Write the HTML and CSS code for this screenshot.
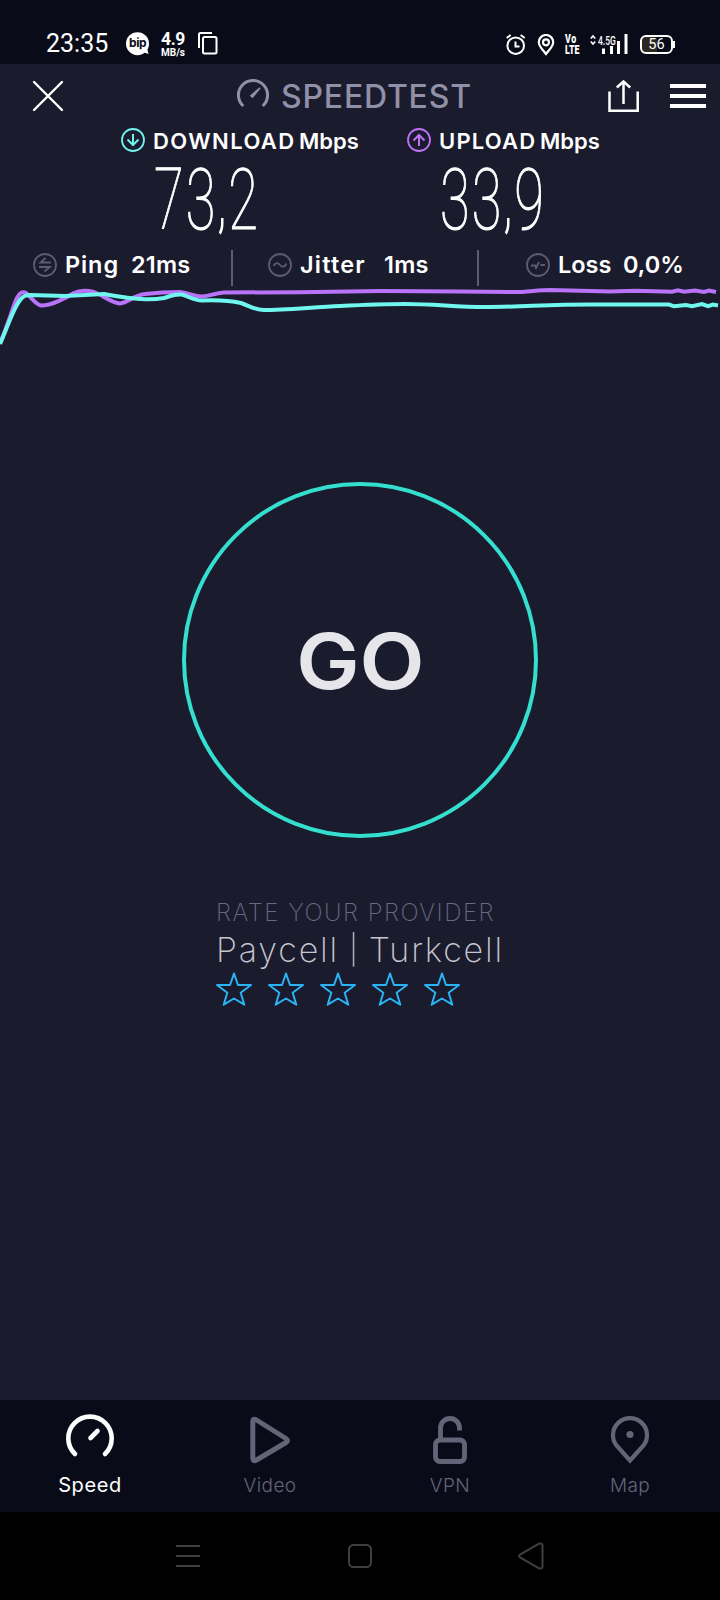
FILE: index.html
```html
<!DOCTYPE html>
<html lang="en">
<head>
<meta charset="utf-8">
<title>Speedtest</title>
<link rel="stylesheet" href="styles.css">
</head>
<body>
<div class="statusbar">
  <span class="clock">23:35</span>
  <span class="bip"><svg width="24" height="24" viewBox="0 0 24 24"><circle cx="11.500" cy="11.700" r="11.500" fill="#fff"/><path d="M17 20l5.500 2-1.500-6z" fill="#fff"/></svg><b>bip</b></span>
  <span class="rate"><b>4.9</b><i>MB/s</i></span>
  <svg class="copy" width="20" height="24" viewBox="0 0 20 24" fill="none" stroke="#fff" stroke-width="2"><path d="M1 16V2.500Q1 1 2.500 1H14"/><rect x="5" y="5" width="13.500" height="16.500" rx="1.500"/></svg>
  <svg class="alarm" width="20" height="22" viewBox="0 0 20 22" fill="none" stroke="#fff" stroke-width="2"><circle cx="9.700" cy="11.700" r="8.300"/><path d="M9.500 7.500v5h4M.7 4l4-3M18.700 4l-4-3"/></svg>
  <svg class="pin" width="18" height="22" viewBox="0 0 18 22" fill="none" stroke="#fff" stroke-width="2.200"><path d="M9 20C6 16 1.800 12.500 1.800 8.200a7.200 7.200 0 0 1 14.400 0C16.200 12.500 12 16 9 20z"/><circle cx="9" cy="8.300" r="3"/></svg>
  <span class="volte"><b>Vo</b><b>LTE</b></span>
  <span class="signal"><svg width="38" height="22" viewBox="0 0 38 22"><path d="M.8 4.500L3 2l2.200 2.500M.8 7.500L3 10l2.200-2.500" fill="none" stroke="#fff" stroke-width="1.700"/><path d="M12 14.500h3V20h-3zM20 12h3v8h-3zM27 7h3v13h-3zM34.500 0h3v20h-3z" fill="#fff"/></svg><b>4.5G</b></span>
  <span class="battery">56</span>
</div>

<div class="app">
  <header class="header">
    <svg class="close" width="32" height="32" viewBox="0 0 32 32" stroke="#fff" stroke-width="2.400" stroke-linecap="round"><path d="M2 2l28 28M30 2L2 30"/></svg>
    <svg class="gauge" width="34" height="30" viewBox="0 0 34 30" fill="none" stroke="#9090a8"><path d="M7.300 27A14.600 14.600 0 1 1 26.700 27" stroke-width="3"/><path d="M13.800 16.800L23.500 8.300 24.500 9.500 16.500 19.200z" fill="#9090a8" stroke="none"/></svg>
    <h1 class="brand">SPEEDTEST</h1>
    <svg class="share" width="32" height="34" viewBox="0 0 32 34" fill="none" stroke="#fff" stroke-width="2.500"><path d="M1.500 11.500v19.300h28.200V11.500M15.500 24V2M8.800 7.500l6.700-6L22.200 7.500"/></svg>
    <svg class="menu" width="36" height="24" viewBox="0 0 36 24" fill="#fff"><path d="M0 0h36v4H0zM0 10h36v4H0zM0 20h36v4H0z"/></svg>
  </header>

  <section class="speeds">
    <div class="speed down">
      <div class="label"><svg width="24" height="24" viewBox="0 0 24 24" fill="none" stroke="#6ff3ec" stroke-width="1.800"><circle cx="12" cy="12" r="11"/><path d="M12 6v11M6.500 11.500L12 17l5.500-5.500" stroke-width="2"/></svg><b>DOWNLOAD</b><em>Mbps</em></div>
      <div class="value">73<i>,</i>2</div>
    </div>
    <div class="speed up">
      <div class="label"><svg width="24" height="24" viewBox="0 0 24 24" fill="none" stroke="#bf71f5" stroke-width="1.800"><circle cx="12" cy="12" r="11"/><path d="M12 18V7M6.500 12.500L12 7l5.500 5.500" stroke-width="2"/></svg><b>UPLOAD</b><em>Mbps</em></div>
      <div class="value">33<i>,</i>9</div>
    </div>
  </section>

  <section class="stats">
    <div class="stat ping"><svg width="24" height="24" viewBox="0 0 24 24" fill="none" stroke="#5c5d72" stroke-width="1.800"><circle cx="12" cy="12" r="11"/><path d="M18 9.500H7.500L12.500 5M6 14h11l-5.500 4.500"/></svg><b>Ping</b><span>21ms</span></div>
    <div class="stat jitter"><svg width="24" height="24" viewBox="0 0 24 24" fill="none" stroke="#5c5d72" stroke-width="1.800"><circle cx="12" cy="12" r="11"/><path d="M5.500 13c2-4 4.500-3.500 6.500-1s4.500 2.500 6.500-1.500"/></svg><b>Jitter</b><span>1ms</span></div>
    <div class="stat loss"><svg width="24" height="24" viewBox="0 0 24 24" fill="none" stroke="#5c5d72" stroke-width="1.800"><circle cx="12" cy="12" r="11"/><path d="M5 12.500h4l1 2.500 3-6M14.500 12H19"/></svg><b>Loss</b><span>0,0%</span></div>
  </section>

  <svg class="chart" width="720" height="62" viewBox="0 286 720 62" fill="none" stroke-width="4">
    <path stroke="#b973f8" d="M0 343C8 325 13 306 17 298Q21 290 26 293C32 298 36 305 41 305.500C50 306 66 298 74 293Q82 289 94 292C104 296 112 303 120 303.500C128 303 134 295 145 294Q162 292 180 292C190 293 195 297 202 296.500C211 296 214 293 224 292.500L300 292.200 380 291 460 291.500 522 292C535 291 540 290 550 290L610 291.500 635 290.800 672 291.800 678 290.300 684 291.800 695 290.600 704 292 709 290.600 716 292"/>
    <path stroke="#6ff7ef" d="M0 344C8 326 14 306 21 299Q24 295 30 295L65 296 104 294C120 297 132 299 145 299.200Q155 299.500 164 298C173 295 176 294 182 294.500C190 297 194 300.500 202 300.500C213 300 225 299.500 241 303C252 307 255 310 264 310C285 310 315 307 340 306Q380 304 405 304C435 304 455 307 485 307C520 307 548 304.500 590 304.500L669 304.500 674 306.300 686 305 692 306.200 702 304 708 306.200 713 304.500 718 305.500"/>
  </svg>

  <main class="stage">
    <button class="go"><span>GO</span></button>
    <section class="provider">
      <p class="prompt">RATE YOUR PROVIDER</p>
      <p class="name"><span>Paycell</span><i>|</i><span>Turkcell</span></p>
      <div class="stars">
        <svg viewBox="0 0 36 34"><path d="M18 1.500l4 11.500h13l-10.300 7.700 3.600 12L18 26.500l-10.300 6.200 3.600-12L1 13h13z"/></svg>
        <svg viewBox="0 0 36 34"><path d="M18 1.500l4 11.500h13l-10.300 7.700 3.600 12L18 26.500l-10.300 6.200 3.600-12L1 13h13z"/></svg>
        <svg viewBox="0 0 36 34"><path d="M18 1.500l4 11.500h13l-10.300 7.700 3.600 12L18 26.500l-10.300 6.200 3.600-12L1 13h13z"/></svg>
        <svg viewBox="0 0 36 34"><path d="M18 1.500l4 11.500h13l-10.300 7.700 3.600 12L18 26.500l-10.300 6.200 3.600-12L1 13h13z"/></svg>
        <svg viewBox="0 0 36 34"><path d="M18 1.500l4 11.500h13l-10.300 7.700 3.600 12L18 26.500l-10.300 6.200 3.600-12L1 13h13z"/></svg>
      </div>
    </section>
  </main>
</div>

<nav class="tabs">
  <a class="tab active"><svg width="50" height="52" viewBox="0 0 50 52" fill="none" stroke="#fff" stroke-width="4.600" stroke-linecap="round"><path d="M10 42A21.700 21.700 0 1 1 40 42M25.500 26l7-7"/></svg><span>Speed</span></a>
  <a class="tab"><svg width="50" height="52" viewBox="0 0 50 52" fill="none" stroke="#646478" stroke-width="5" stroke-linejoin="round"><path d="M7.800 9.500V46Q7.800 50 11.500 48L41 30.500Q44 28.500 41 26.500L11.500 8Q7.800 6 7.800 9.500z"/></svg><span>Video</span></a>
  <a class="tab"><svg width="50" height="52" viewBox="0 0 50 52" fill="none" stroke="#646478" stroke-width="4.800"><rect x="10.500" y="28" width="29" height="21.500" rx="4.500"/><path d="M15.500 28V16a9.500 9.500 0 0 1 19 0v2.500"/></svg><span>VPN</span></a>
  <a class="tab"><svg width="50" height="52" viewBox="0 0 50 52" fill="none" stroke="#646478" stroke-width="4.200"><path d="M25 48.500L11.500 33.500A17 17 0 1 1 38.500 33.500z"/><circle cx="25" cy="22.500" r="3.600" fill="#646478" stroke="none"/></svg><span>Map</span></a>
</nav>

<div class="sysnav">
  <svg width="24" height="26" viewBox="0 0 24 26" stroke="#404040" stroke-width="2"><path d="M0 3h24M0 13h24M0 23h24"/></svg>
  <svg class="home" width="24" height="26" viewBox="0 0 24 26" fill="none" stroke="#404040" stroke-width="2"><rect x="1" y="2" width="22" height="22" rx="4.500"/></svg>
  <svg width="26" height="28" viewBox="0 0 26 28" fill="none" stroke="#404040" stroke-width="2"><path d="M2 12.700Q.2 14 2 15.300L21 26.300Q24.500 27.500 24.500 24V4Q24.500.5 21 1.700z"/></svg>
</div>
</body>
</html>
```
FILE: styles.css
```css
* { box-sizing: border-box; margin: 0; padding: 0; }
body {
  width: 720px;
  height: 1600px;
  overflow: hidden;
  background: #000;
  color: #fff;
  font-family: Inter, "Liberation Sans", sans-serif;
}
svg { display: block; flex: none; }
b { font-weight: 500; }
i, em { font-style: normal; }

.statusbar {
  display: flex;
  align-items: flex-start;
  height: 64px;
  background: #090b18;
  white-space: nowrap;
}
.clock {
  width: 80px;
  margin: 29px 0 0 46px;
  font: 400 25px/30px Roboto, sans-serif;
}
.bip { position: relative; width: 24px; margin-top: 32px; }
.bip b {
  position: absolute;
  left: 3px;
  top: 3px;
  font: 700 12px/16px Inter, sans-serif;
  letter-spacing: -.4px;
  color: #090b18;
}
.rate { display: flex; flex-direction: column; width: 26px; margin: 31px 0 0 10px; align-items: center; }
.rate b { font: 700 17.500px/17px Roboto, sans-serif; letter-spacing: -.4px; }
.rate i { font: 700 10px/10px Roboto, sans-serif; }
.copy { margin: 32px 0 0 12px; }
.alarm { margin: 34px 0 0 288px; }
.pin { margin: 34px 0 0 11px; }
.volte { display: flex; flex-direction: column; width: 16px; margin: 33px 0 0 10px; }
.volte b {
  font: 900 13px/11px Roboto, sans-serif;
  transform: scaleX(.68);
  transform-origin: 0 0;
}
.volte b:first-child { letter-spacing: 1px; }
.signal { position: relative; width: 38px; margin: 34px 0 0 9px; }
.signal b {
  position: absolute;
  left: 8px;
  top: 0;
  font: 500 12.500px/13px Roboto, sans-serif;
  transform: scaleX(.68);
  transform-origin: 0 0;
}
.battery {
  position: relative;
  width: 33px;
  height: 19px;
  margin: 35px 0 0 12px;
  border: 2px solid #fff;
  border-radius: 6px;
  background: linear-gradient(90deg, #2c271f 52%, #090b18 52%);
  font: 400 14.500px/15px Roboto, sans-serif;
  text-align: center;
}
.battery::after {
  content: "";
  position: absolute;
  right: -4px;
  top: 4px;
  width: 2px;
  height: 7px;
  background: #fff;
}

.app {
  display: flex;
  flex-direction: column;
  height: 1336px;
  background: #1b1b2e;
}
.header { display: flex; align-items: flex-start; height: 64px; }
.close { margin: 16px 0 0 32px; }
.gauge { margin: 15px 0 0 172px; }
.brand {
  width: 326px;
  margin: 13px 0 0 11px;
  font-weight: 500;
  font-size: 32px;
  line-height: 40px;
  letter-spacing: .8px;
  color: #9090a8;
}
.share { margin: 16px 0 0 1px; }
.menu { margin: 20px 0 0 30px; }

.speeds { display: flex; height: 122px; white-space: nowrap; }
.speed { width: 286px; }
.down { margin-left: 121px; }
.label { display: flex; height: 24px; line-height: 26px; font-size: 22px; }
.label b { width: 139px; margin-left: 8px; font-weight: 600; letter-spacing: 1.400px; }
.up .label b { width: 94px; letter-spacing: 1.200px; }
.label em { margin-left: 7px; font-weight: 600; }
.value {
  width: 170px;
  margin: 4px 0 0 33px;
  font: 100 86px/88px Roboto, sans-serif;
  letter-spacing: 3.500px;
  -webkit-text-stroke: 1.100px #fff;
  transform: scaleX(.63);
  transform-origin: 0 0;
}
.value i { font-size: 70px; line-height: 0; vertical-align: 5px; -webkit-text-stroke: 2px #fff; }

.stats { display: flex; height: 36px; white-space: nowrap; font-size: 23.500px; line-height: 24px; }
.stat { display: flex; padding-top: 3px; }
.stat b, .stat span { font-weight: 600; }
.stat b { margin-left: 8px; letter-spacing: .9px; }
.ping { width: 233px; padding-left: 33px; border-right: 2px solid #5c5d72; }
.ping b { width: 66px; }
.jitter { width: 246px; padding-left: 35px; border-right: 2px solid #5c5d72; }
.jitter b { width: 84px; letter-spacing: 1.200px; }
.loss { padding-left: 47px; }
.loss b { width: 65px; letter-spacing: 0; }
.stat span { letter-spacing: .2px; }
.loss span { letter-spacing: 0; }

.stage { display: flex; flex-direction: column; align-items: center; padding-top: 134px; }
.go {
  width: 356px;
  height: 356px;
  padding-top: 2px;
  border: 4px solid #35dfcf;
  border-radius: 50%;
  background: none;
  color: #e6e5e9;
  font: 600 77px/90px Inter, sans-serif;
}
.go span { display: inline-block; transform: scaleX(1.1); }
.provider { width: 288px; margin-top: 60px; white-space: nowrap; }
.prompt { font-size: 24px; line-height: 30px; font-weight: 200; letter-spacing: 1.500px; color: #686980; }
.name { display: flex; font-size: 34px; line-height: 43px; font-weight: 200; letter-spacing: 1.850px; color: #c6c6ce; }
.name span:first-child { width: 136px; }
.name i { width: 20px; font-size: 29px; }
.stars { display: flex; gap: 16px; margin-top: 1px; }
.stars svg { width: 36px; height: 34px; fill: none; stroke: #2ab4f5; stroke-width: 2; stroke-linejoin: round; }

.tabs { display: flex; height: 112px; background: #090b18; }
.tab { display: flex; flex-direction: column; align-items: center; width: 180px; padding-top: 12px; }
.tab span { margin-top: 9px; font-size: 19px; line-height: 26px; font-weight: 300; color: #646478; letter-spacing: .4px; }
.tab.active span { margin-top: 8px; font-size: 20px; font-weight: 400; color: #fff; letter-spacing: .6px; }

.sysnav { display: flex; align-items: center; justify-content: space-between; height: 88px; padding: 0 176px; }
.home { margin-left: 2px; }
```
